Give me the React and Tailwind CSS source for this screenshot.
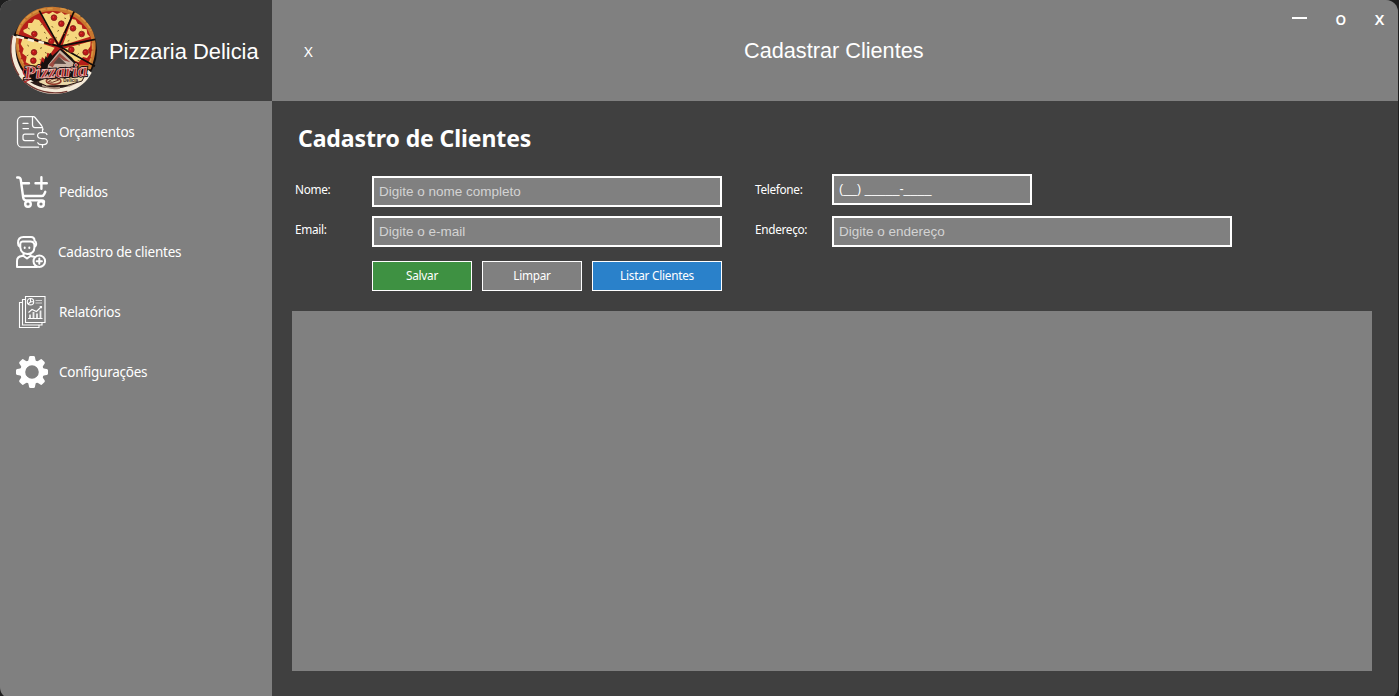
import React from "react";

const ui = "font-['Noto_Sans',sans-serif]";
const arial = "font-['Liberation_Sans',Arial,sans-serif]";

function PizzaLogo() {
  const pepperoni = [
    [162, 53], [184, 71], [103, 102], [154, 124], [219, 85], [245, 102],
    [214, 149], [257, 157], [102, 157], [100, 182],
  ];
  const crumbs =
    "M84 84l5 3M122 76l4-5M132 96l5 4M118 120l6-2M139 111l2 6M172 94l5-3M155 78l4 5M190 98l5 3M166 112l5 2M200 106l6-2M226 112l5 3M203 124l5-3M234 134l6 1M193 54l5 2M82 135l5 4M120 145l6-2M135 157l5 3M80 168l5-3M119 178l5 3M232 164l4-4M233 181l6 2M198 155l5-3";
  return (
    <svg className="size-[100px] shrink-0" viewBox="0 3 300 300">
      <circle cx="162" cy="151" r="129" fill="#17100e" />
      <path d="M38 106C24 158 38 214 74 247C109 281 162 291 209 274C238 264 260 246 275 218L264 209C229 258 166 277 116 253C60 228 36 169 51 110Z" fill="#f5ead8" />
      <path d="M37 107C27 150 34 192 57 226M68 239C103 274 153 286 202 274" fill="none" stroke="#6f342e" strokeWidth="4" />
      <path d="M47 105C52 72 77 42 112 28C175 6 243 34 272 82C297 124 287 170 272 208L70 207C50 176 44 143 49 115Z" fill="#c7772f" />
      <path d="M57 102C63 78 84 54 118 40C168 21 229 41 260 85C282 120 279 159 266 195L73 194C57 171 53 143 57 114Z" fill="#b51e19" />
      <g fill="#f5d77e">
        <path d="M71 97L70 90L83 84L85 69L96 69L104 57L117 60L171 134L124 122Z" />
        <path d="M123 44L138 38L147 42L158 35L171 42L184 36L194 44L209 41L210 58L176 128L144 83Z" />
        <path d="M216 57L227 59L233 71L245 75L247 86L260 88L262 102L270 110L188 136Z" />
        <path d="M188 147L272 124L271 139L264 149L269 163L261 174L249 171L236 187L220 181Z" />
        <path d="M68 115L94 120L164 143L151 162L142 158L138 180L126 171L119 195L93 195L77 187L80 170L67 160L71 146L62 132Z" />
      </g>
      <path d="M55 92C68 50 112 24 158 26M181 26C227 31 259 60 273 92M277 130C280 151 275 173 267 192M54 133C55 155 61 175 70 190" fill="none" stroke="#d99440" strokeWidth="5" strokeDasharray="18 5" />
      <path d="M118 32L177 139L222 35M177 139L286 118M178 139L285 199M178 139L43 104" fill="none" stroke="#120c0a" strokeWidth="5" />
      <path d="M49 110L72 115M83 118L102 123M115 125L132 129" stroke="#f7efd9" strokeWidth="7" />
      <path d={crumbs} stroke="#806129" strokeWidth="3" />
      {pepperoni.map(([x, y]) => (
        <g key={`${x}-${y}`}>
          <circle cx={x} cy={y} r="8.5" fill="#bd1718" stroke="#80221a" strokeWidth="2.500" />
          <circle cx={x - 2} cy={y - 2} r="2" fill="#e2534a" />
        </g>
      ))}
      <path d="M120 210L125 183L131 188L137 168L142 174L151 158L157 167L182 145L216 173L230 191L227 214Z" fill="#18110f" />
      <path d="M144 195L180 150L222 190L212 220L141 219Z" fill="#c9b3a4" />
      <path d="M146 196L179 159L211 187L191 181L178 170L158 202Z" fill="#9c4a40" />
      <path d="M177 170L199 192L160 191Z" fill="#594640" />
      <path d="M90 246L246 232C225 257 195 266 155 265C128 264 106 257 90 246Z" fill="#2a1b18" />
      <path d="M126 256Q150 268 180 263M205 258L228 248" fill="none" stroke="#a88e7c" strokeWidth="6" />
      <path d="M112 246C138 229 167 228 188 233L254 227L246 243L202 256L140 258Z" fill="#ecd9a9" stroke="#2a1713" strokeWidth="3" />
      <ellipse cx="161" cy="243" rx="22" ry="10" fill="#e8d3a6" stroke="#943a2b" strokeWidth="5" />
      <path d="M145 245Q164 230 176 240L157 247Z" fill="none" stroke="#743426" strokeWidth="3" />
      <g transform="rotate(-3 166 218)" fontFamily="Liberation Serif, serif" fontStyle="italic" fontWeight="bold">
        <text x="72" y="232" fontSize="55" textLength="190" lengthAdjust="spacingAndGlyphs" fill="#a62225" stroke="#160e10" strokeWidth="8" paintOrder="stroke">Pizzaria</text>
        <text x="72" y="232" fontSize="55" textLength="190" lengthAdjust="spacingAndGlyphs" fill="#ad2528" stroke="#e8c3bb" strokeWidth="2">Pizzaria</text>
      </g>
      <path d="M72 247L88 239M83 211L72 207Q66 219 76 226" fill="none" stroke="#b52b2c" strokeWidth="4" />
      <text x="190" y="247" fontSize="14" textLength="44" lengthAdjust="spacingAndGlyphs" fontFamily="Liberation Sans" fontWeight="bold" fill="#3b2117">Delicia</text>
    </svg>
  );
}

function BudgetIcon() {
  return (
    <svg className="size-8" viewBox="0 0 32 32" fill="none" stroke="white" strokeWidth="1.25" strokeLinecap="round" strokeLinejoin="round">
      <path d="M22.5 31.2H6A4.5 4.5 0 0 1 1.5 26.700V5A4.5 4.5 0 0 1 6 .7H17.500Q18.300.7 19 1.500L25.500 9.500Q27 11.600 27 13.500M16.500 1V9Q16.500 11.500 19 11.500H26.500M7 7.400H12M7 12.500H12.500M18 18.100H9Q7 18.100 7 20.100V22.600Q7 24.600 9 24.600H18" />
      <path d="M31 18.500Q30.500 16.700 27.500 16.500H25.500Q21.600 16.700 21.600 19.500Q21.600 22.300 25.500 22.500H27.500Q31.300 22.700 31.300 25.600Q31.300 28.500 27.500 28.700H25.500Q22.500 28.700 21.700 26.800M26.500 13.700V16.500M26.500 28.700V31.300" />
    </svg>
  );
}

function CartIcon() {
  return (
    <svg className="size-8" viewBox="0 0 32 32" fill="none" stroke="white" strokeWidth="2.4" strokeLinecap="round" strokeLinejoin="round">
      <path d="M1.200 1.500H2.500Q4.500 1.500 4.800 4L7.200 21.500Q7.400 24 9.800 24.400H26Q28 24.400 28 26M5.300 7.200H13M7 20H25.500Q27.500 20 28.300 18L29.300 15.800M25.400 1.300V12.800M19.500 7.200H30.800" />
      <circle cx="12" cy="28" r="2.800" /><circle cx="25" cy="28" r="2.800" />
    </svg>
  );
}

function ClientIcon() {
  return (
    <svg className="size-8" viewBox="0 0 32 32" fill="none" stroke="white" strokeWidth="2" strokeLinecap="round" strokeLinejoin="round">
      <path d="M3.500 10.500Q2 9.500 2 7C2 3 4.200 1 7.500 1H15Q18.500 1 18.500 4.500Q20.300 5.500 20.200 8Q20.200 10 18.700 11M4.300 9.500Q4 5.500 6.500 5.500H14.500Q18 5.500 18.400 9V11.500Q18.300 17.700 11.300 18Q5 17.500 4.300 11.500ZM7.500 17.500V20L11 22.500L14.500 20V17.500M7.500 20H6Q1 20.500 1 25V31H21M14.500 20L18 20.700" />
      <circle cx="23.300" cy="25.200" r="5.800" /><path d="M23.300 22.600V27.800M20.700 25.200H25.900M8.700 11.500V12M13.300 11.500V12" />
    </svg>
  );
}

function ReportIcon() {
  return (
    <svg className="size-8" viewBox="0 0 32 32" fill="none" stroke="white" strokeWidth="1.100">
      <path d="M9.500.5H29V26.500H9.500ZM9.500 3.500H6.500V29H26V26.500M6.500 6.500H3.500V31.500H23V29" />
      <circle cx="14.500" cy="5.700" r="3.200" /><path d="M14.500 2.500V6L12 8M14.500 5.700H17.700M12.500 16.500L16 13.500L20.500 15.500L25.500 10.500M23.700 10.500H25.500V12.300M12 22.500H26.500" />
      <path d="M19.500 4.500H26M19.500 7H26" opacity=".65" />
      <path d="M14 22V18.500M17.500 22V16M21 22V17.500M24.500 22V14.500" strokeWidth="1.800" opacity=".85" />
    </svg>
  );
}

function GearIcon() {
  const teeth = [0, 45, 90, 135, 180, 225, 270, 315];
  return (
    <svg className="size-8" viewBox="0 0 32 32" fill="white">
      {teeth.map((a) => (
        <path key={a} transform={`rotate(${a} 16 16)`} d="M11.200 6Q12.500 5 12.700 3L13 1.200Q13.200 0 14.500 0H17.500Q18.800 0 19 1.200L19.300 3Q19.500 5 20.800 6L18 9H14Z" />
      ))}
      <circle cx="16" cy="16" r="9.300" fill="none" stroke="white" strokeWidth="5" />
    </svg>
  );
}

const menu = [
  { label: "Orçamentos", Icon: BudgetIcon, indent: "pl-[11px]" },
  { label: "Pedidos", Icon: CartIcon, indent: "pl-[11px]" },
  { label: "Cadastro de clientes", Icon: ClientIcon, indent: "pl-[10px]" },
  { label: "Relatórios", Icon: ReportIcon, indent: "pl-[11px]" },
  { label: "Configurações", Icon: GearIcon, indent: "pl-[11px]" },
];

function Field({ label, placeholder, value, width, lift = "" }) {
  return (
    <label className="flex h-[31px] items-start">
      <span className={`${ui} w-[77px] shrink-0 pt-[5px] text-[11.8px] leading-4 tracking-[-0.32px]`}>{label}</span>
      <input
        type="text"
        defaultValue={value}
        placeholder={placeholder}
        className={`${arial} ${width} ${lift} h-[31px] border-2 border-white bg-[#808080] px-[5px] pb-px text-white outline-none placeholder:text-[#d3d3d3] ${value ? "text-[12.5px]" : "text-[13.5px]"}`}
      />
    </label>
  );
}

const buttonBase = `${ui} flex h-[30px] items-center justify-center border border-white pb-px text-[11.8px] tracking-[-0.25px]`;

export default function App() {
  return (
    <div className="h-[696px] w-[1399px] overflow-hidden bg-[#1e1e1e] text-white">
      <div className="flex h-[699px] w-[1398px] overflow-hidden rounded-[12px] bg-[#404040]">
        <aside className="flex w-[272px] shrink-0 flex-col bg-[#808080]">
          <div className="flex h-[101px] items-center bg-[#404040]">
            <PizzaLogo />
            <div className={`${arial} whitespace-nowrap pl-[9px] pt-[3px] text-[21.9px]`}>Pizzaria Delicia</div>
          </div>
          <nav className="flex flex-col">
            {menu.map(({ label, Icon, indent }) => (
              <button key={label} className="flex h-[60px] items-center pl-4 pt-[2px] text-left">
                <Icon />
                <span className={`${ui} ${indent} text-[13.5px] leading-5 tracking-[-0.24px]`}>{label}</span>
              </button>
            ))}
          </nav>
        </aside>

        <section className="flex min-w-0 flex-1 flex-col">
          <header className="flex h-[101px] shrink-0 items-start bg-[#808080]">
            <button className={`${ui} ml-[31px] mt-[41px] w-[11px] text-[15px] leading-5`}>X</button>
            <h1 className={`${arial} ml-[430px] mt-[36px] w-[200px] text-[21.7px] leading-[30px]`}>Cadastrar Clientes</h1>
            <div className={`${ui} ml-auto flex pt-[9px] text-[15px] font-semibold leading-5`}>
              <button className="flex w-[41px] items-center justify-center">
                <span className="mb-[3px] h-[2px] w-[15px] bg-white" />
              </button>
              <button className="w-[41px]"><span className="inline-block scale-x-90">O</span></button>
              <button className="w-[37px]">X</button>
            </div>
          </header>

          <main className="flex flex-col px-5 pt-[20px]">
            <h2 className={`${ui} pl-[6px] text-[23px] font-bold leading-[34px] tracking-[-0.1px]`}>Cadastro de Clientes</h2>
            <form className="mt-[21px] grid grid-cols-[460px_480px] gap-y-[9px] pl-[3px]">
              <Field label="Nome:" placeholder="Digite o nome completo" width="w-[350px]" />
              <Field label="Telefone:" value="(__) _____-____" width="w-[200px]" lift="-mt-[2px]" />
              <Field label="Email:" placeholder="Digite o e-mail" width="w-[350px]" />
              <Field label="Endereço:" placeholder="Digite o endereço" width="w-[400px]" />
            </form>
            <div className="mt-[14px] flex gap-[10px] pl-[80px]">
              <button className={`${buttonBase} w-[100px] bg-[#3e9142]`}>Salvar</button>
              <button className={`${buttonBase} w-[100px] bg-[#808080]`}>Limpar</button>
              <button className={`${buttonBase} w-[130px] bg-[#2a81ca]`}>Listar Clientes</button>
            </div>
            <div className="mt-5 h-[360px] w-[1080px] bg-[#808080]" />
          </main>
        </section>
      </div>
    </div>
  );
}
